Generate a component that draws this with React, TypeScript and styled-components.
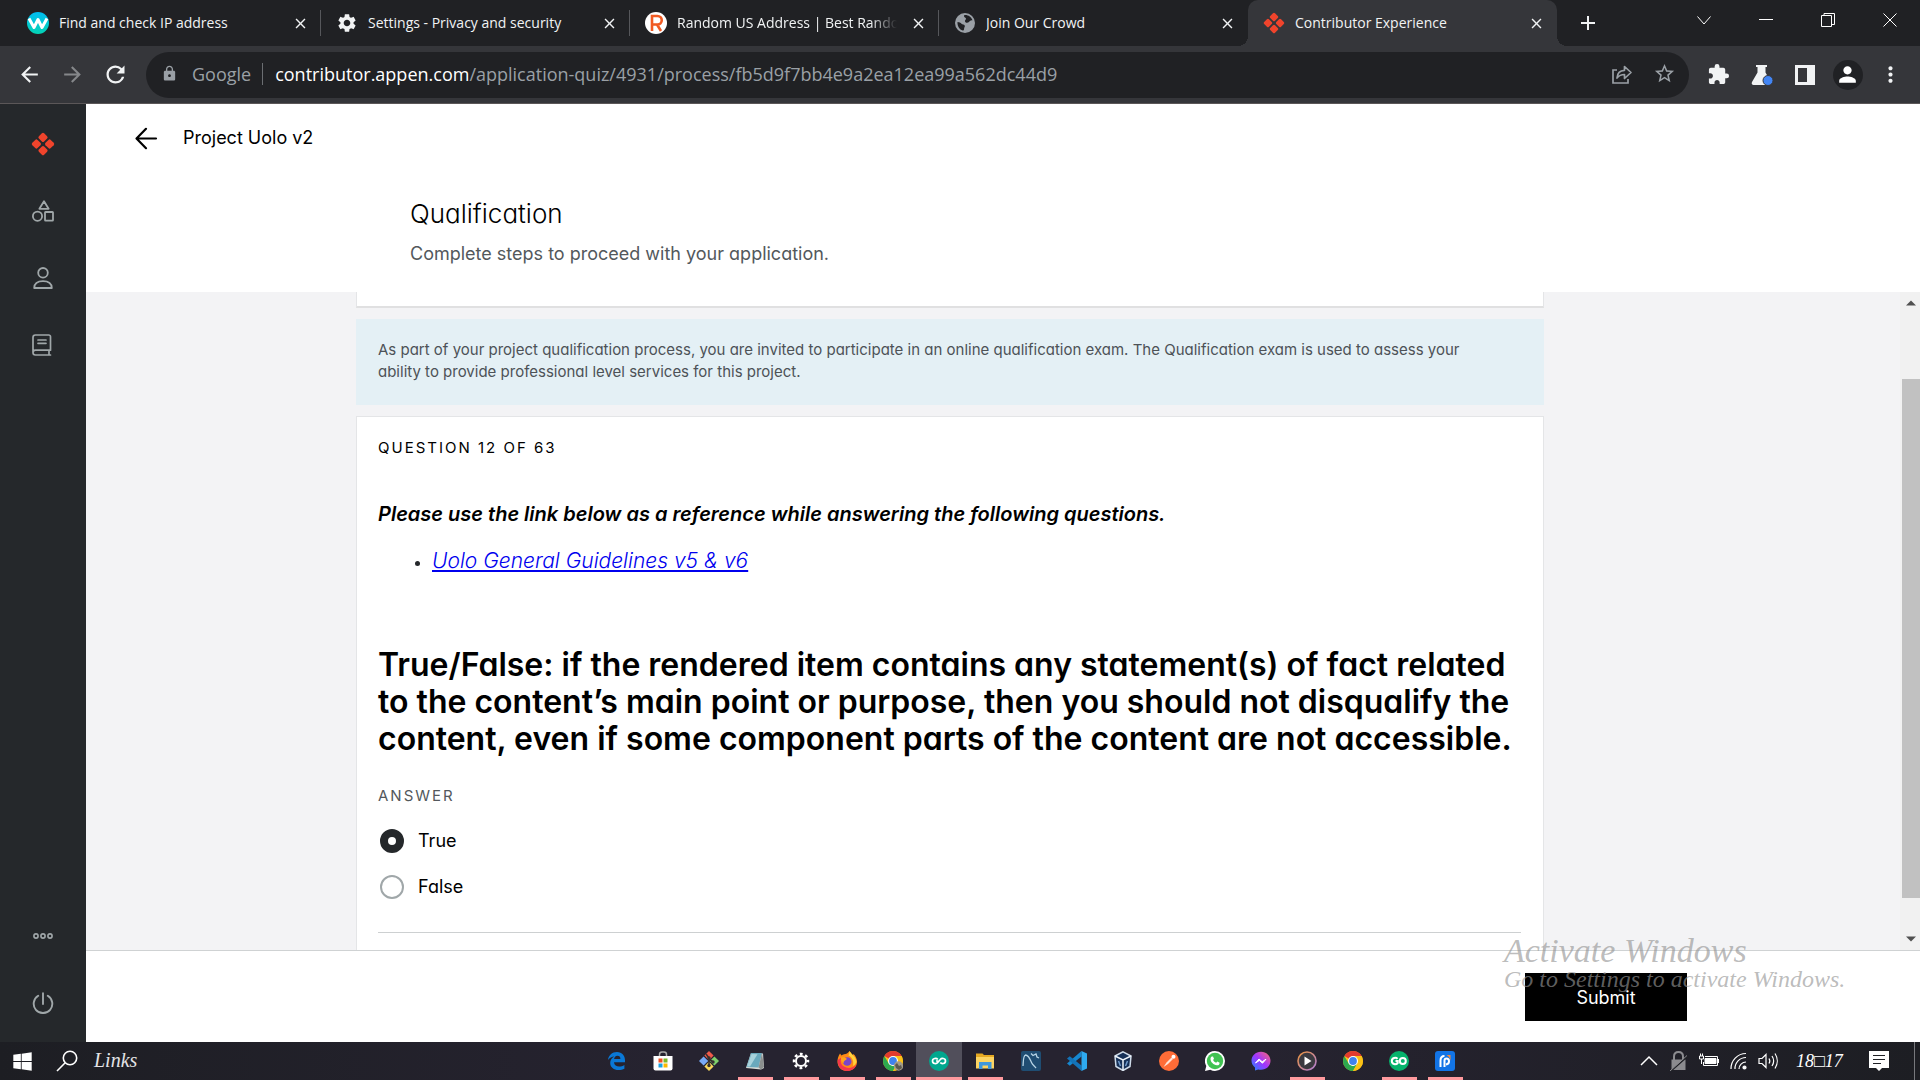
import React, { useState } from "react";
import styled, { createGlobalStyle, css } from "styled-components";
import {
  MdArrowBack,
  MdArrowForward,
  MdClose,
  MdExtension,
  MdLock,
  MdMoreVert,
  MdPerson,
  MdRefresh,
  MdSettings,
  MdStarBorder,
  MdAdd,
} from "react-icons/md";
import { FaWindows } from "react-icons/fa";

const chromeFont = '"Open Sans", "Noto Sans", sans-serif';
const pageFont = 'Inter, "Open Sans", sans-serif';
const scriptFont = '"Liberation Serif", serif';

const GlobalStyle = createGlobalStyle`
  *, *::before, *::after { box-sizing: border-box; }
  body {
    margin: 0;
    font-family: ${pageFont};
    font-feature-settings: "cv11";
    color: #000;
    background: #fff;
  }
  button { font: inherit; color: inherit; background: none; border: 0; padding: 0; cursor: pointer; }
  svg { display: block; flex: none; }
`;

const Screen = styled.div`
  display: flex;
  flex-direction: column;
  height: 100vh;
  overflow: hidden;
  position: relative;
`;

/* ---------- browser chrome ---------- */

const TabStrip = styled.div`
  display: flex;
  height: 46px;
  flex: none;
  padding-left: 12px;
  background: #202124;
  color: #f1f3f4;
  font-family: ${chromeFont};
  font-size: 14px;
`;

const Tab = styled.div<{ $active?: boolean; $line?: boolean }>`
  display: flex;
  align-items: center;
  flex: 0 1 309px;
  min-width: 0;
  padding: 0 12px 0 15px;
  position: relative;
  ${(p) =>
    p.$active &&
    css`
      background: #35363a;
      border-radius: 10px 10px 0 0;
      &::before,
      &::after {
        content: "";
        position: absolute;
        bottom: 0;
        width: 10px;
        height: 10px;
      }
      &::before {
        right: 100%;
        background: radial-gradient(circle at 0 0, transparent 10px, #35363a 10px);
      }
      &::after {
        left: 100%;
        background: radial-gradient(circle at 100% 0, transparent 10px, #35363a 10px);
      }
    `}
  ${(p) =>
    p.$line &&
    css`
      &::after {
        content: "";
        position: absolute;
        right: 0;
        top: 10px;
        width: 1px;
        height: 26px;
        background: #56575b;
      }
    `}
`;

const TabButton = styled.button`
  display: flex;
  align-items: center;
  gap: 10px;
  flex: 1;
  min-width: 0;
`;

const TabTitle = styled.span<{ $fade?: boolean }>`
  flex: 1;
  min-width: 0;
  margin-right: 12px;
  padding-bottom: 2px;
  overflow: hidden;
  white-space: nowrap;
  text-align: left;
  ${(p) => p.$fade && "mask-image: linear-gradient(to right, #000 88%, transparent);"}
`;

const IconButton = styled.button<{ $w?: number; $color?: string }>`
  display: flex;
  align-items: center;
  justify-content: center;
  width: ${(p) => p.$w ?? 43}px;
  flex: none;
  align-self: stretch;
  color: ${(p) => p.$color ?? "inherit"};
`;

const CloseButton = styled.button`
  display: flex;
  align-items: center;
  justify-content: center;
  width: 18px;
  height: 18px;
`;

const WindowControls = styled.div`
  display: flex;
  margin-left: auto;
  height: 40px;
`;

const Toolbar = styled.div`
  display: flex;
  align-items: center;
  height: 58px;
  flex: none;
  padding: 0 8px;
  background: #35363a;
  border-bottom: 1px solid #5b5758;
  color: #f1f3f4;
  font-family: ${chromeFont};
`;

const AddressBar = styled.div`
  display: flex;
  align-items: center;
  flex: 1;
  min-width: 0;
  height: 46px;
  margin: 0 8px 0 9px;
  padding: 0 3px 2px 15px;
  border-radius: 23px;
  background: #202124;
  color: #9aa0a6;
  font-size: 18px;
`;

const SiteName = styled.span`
  margin-left: 14px;
  padding-right: 11px;
  border-right: 1px solid #6b6e72;
  line-height: 22px;
`;

const Url = styled.span`
  flex: 1;
  min-width: 0;
  margin-left: 12px;
  overflow: hidden;
  white-space: nowrap;
`;

const Host = styled.span`
  color: #fff;
`;

const Avatar = styled.span`
  display: flex;
  align-items: center;
  justify-content: center;
  width: 30px;
  height: 30px;
  border-radius: 50%;
  background: #202124;
  color: #fff;
`;

/* ---------- application ---------- */

const Workspace = styled.div`
  display: flex;
  flex: 1;
  min-height: 0;
`;

const Sidebar = styled.nav`
  display: flex;
  flex-direction: column;
  align-items: center;
  width: 86px;
  flex: none;
  padding: 6px 0;
  background: #25282b;
  color: #a0a7a9;
`;

const SideItem = styled.a`
  display: flex;
  align-items: center;
  justify-content: center;
  width: 100%;
  height: 67px;
  color: inherit;
`;

const SideGap = styled.div`
  flex: 1;
`;

const Main = styled.main`
  display: flex;
  flex-direction: column;
  flex: 1;
  min-width: 0;
`;

const PageHeader = styled.header`
  flex: none;
  height: 188px;
  padding-top: 20px;
`;

const TitleRow = styled.div`
  display: flex;
  align-items: center;
  gap: 25px;
  height: 28px;
  padding-left: 48px;
`;

const ProjectTitle = styled.span`
  font-size: 18px;
  line-height: 28px;
`;

const HeaderBody = styled.div`
  padding-right: 106px;
`;

const Intro = styled.div`
  max-width: 1080px;
  margin: 44px auto 0;
`;

const Heading = styled.h1`
  margin: 0;
  font-size: 26px;
  font-weight: 350;
  line-height: 36px;
`;

const Lead = styled.p`
  margin: 8px 0 0;
  font-size: 18px;
  line-height: 28px;
  color: #53585c;
`;

const ScrollArea = styled.div`
  display: flex;
  flex: 1;
  min-height: 0;
  background: #f3f3f5;
`;

const ScrollBody = styled.div`
  display: flex;
  flex: 1;
  min-width: 0;
  overflow: hidden;
  padding-right: 86px;
`;

const Column = styled.div`
  display: flex;
  flex-direction: column;
  gap: 11px;
  width: 100%;
  max-width: 1188px;
  margin: 0 auto;
`;

const PreviousCard = styled.div`
  flex: none;
  height: 16px;
  background: #fff;
  border: 1px solid #e4e5e7;
  border-top: 0;
  border-bottom: 2px solid #e0e0e1;
`;

const Notice = styled.p`
  flex: none;
  height: 86px;
  margin: 0;
  padding: 20px 44px 20px 22px;
  background: #e4f0f5;
  color: #4d5257;
  font-size: 15px;
  line-height: 22px;
`;

const QuestionCard = styled.section`
  flex: 1;
  padding: 20px 22px 0 21px;
  background: #fff;
  border: 1px solid #e4e5e7;
  border-bottom: 0;
`;

const Overline = styled.div<{ $muted?: boolean }>`
  font-size: 15px;
  line-height: 22px;
  letter-spacing: 2px;
  color: ${(p) => (p.$muted ? "#53585c" : "#000")};
`;

const Reference = styled.p`
  margin: 41px 0 0;
  font-size: 20px;
  font-weight: 600;
  font-style: italic;
  line-height: 28px;
`;

const LinkList = styled.ul`
  margin: 19px 0 0;
  padding-left: 54px;
  color: #25282b;
`;

const LinkItem = styled.li`
  font-size: 21px;
  line-height: 28px;
  &::marker {
    font-size: 16px;
  }
`;

const GuideLink = styled.a`
  color: #0000ee;
  font-style: italic;
  font-weight: 350;
  text-decoration: underline;
`;

const Question = styled.h2`
  margin: 71px 0 0;
  font-size: 32px;
  font-weight: 580;
  line-height: 37px;
`;

const Answers = styled.fieldset`
  margin: 28px 0 0;
  padding: 0 0 33px;
  border: 0;
  border-bottom: 1px solid #cdd0d1;
`;

const Legend = styled.legend`
  padding: 0;
`;

const Option = styled.label`
  display: flex;
  align-items: center;
  gap: 14px;
  height: 24px;
  margin: 22px 0 0 2px;
  font-size: 18px;
  line-height: 24px;
`;

const Radio = styled.input`
  appearance: none;
  width: 24px;
  height: 24px;
  margin: 0;
  border: 2px solid #a0a7a9;
  border-radius: 50%;
  background: #fff;
  &:checked {
    border: 8px solid #25282b;
  }
`;

const Scrollbar = styled.div`
  display: flex;
  flex-direction: column;
  align-items: flex-end;
  width: 20px;
  flex: none;
  background: #f1f1f1;
`;

const ScrollArrow = styled.button`
  display: flex;
  align-items: center;
  justify-content: center;
  width: 18px;
  height: 22px;
`;

const Thumb = styled.div`
  width: 18px;
  flex: 519;
  background: #c1c1c1;
`;

const TrackPart = styled.div<{ $share: number }>`
  flex: ${(p) => p.$share};
`;

const Footer = styled.footer`
  display: flex;
  align-items: center;
  justify-content: flex-end;
  flex: none;
  height: 92px;
  padding-right: 233px;
  border-top: 1px solid #cfd2d3;
`;

const Submit = styled.button`
  width: 162px;
  height: 48px;
  padding-top: 2px;
  background: #000;
  color: #fff;
  font-size: 18px;
`;

const Watermark = styled.div`
  position: absolute;
  right: 80px;
  bottom: 88px;
  width: 336px;
  font-family: ${scriptFont};
  font-style: italic;
  color: rgba(150, 150, 150, 0.65);
  white-space: nowrap;
  pointer-events: none;
`;

const WatermarkTitle = styled.div`
  font-size: 34px;
  line-height: 30px;
`;

const WatermarkText = styled.div`
  font-size: 24px;
  line-height: 26px;
`;

/* ---------- taskbar ---------- */

const Taskbar = styled.div`
  display: flex;
  height: 38px;
  flex: none;
  background: linear-gradient(to right, #1d1e23, #262330 35%, #262330 65%, #1d1e23);
  color: #fff;
`;

const TaskSide = styled.div<{ $share: number; $end?: boolean }>`
  display: flex;
  align-items: center;
  flex: ${(p) => p.$share} 1 0;
  justify-content: ${(p) => (p.$end ? "flex-end" : "flex-start")};
  font-family: ${scriptFont};
  font-style: italic;
  font-size: 18px;
`;

const TaskApps = styled.div`
  display: flex;
`;

const TaskApp = styled.button<{ $open?: boolean; $active?: boolean }>`
  display: flex;
  align-items: center;
  justify-content: center;
  width: 46px;
  background: ${(p) => (p.$active ? "#514f5b" : "none")};
  position: relative;
  ${(p) =>
    p.$open &&
    css`
      &::after {
        content: "";
        position: absolute;
        bottom: 0;
        left: ${p.$active ? 0 : 6}px;
        right: ${p.$active ? 0 : 5}px;
        height: 3px;
        background: #ff9a9e;
      }
    `}
`;

const LinksLabel = styled.span`
  margin-left: 5px;
  padding-bottom: 2px;
  font-size: 20px;
  color: #e4e4e6;
`;

const Clock = styled.span`
  width: 46px;
  margin: 0 27px 0 12px;
  text-align: center;
  white-space: nowrap;
`;

const ShowDesktop = styled.button`
  width: 6px;
  margin-left: 25px;
  align-self: stretch;
  border-left: 1px solid #77787c;
`;

/* ---------- drawings ---------- */

const AppenMark = ({ size }: { size: number }) => (
  <svg width={size} height={size} viewBox="0 0 24 24" fill="#f0442c">
    {[
      [12, 5.4],
      [5.4, 12],
      [18.6, 12],
      [12, 18.6],
    ].map(([x, y]) => (
      <rect key={`${x}-${y}`} x={x - 3.7} y={y - 3.7} width="7.4" height="7.4" rx="1.6" transform={`rotate(45 ${x} ${y})`} />
    ))}
  </svg>
);

const WFavicon = () => (
  <svg width="22" height="22" viewBox="0 0 22 22">
    <defs>
      <linearGradient id="wf" x1="0" y1="0" x2="0" y2="1">
        <stop offset="0" stopColor="#00bdf2" />
        <stop offset="1" stopColor="#04d3b4" />
      </linearGradient>
    </defs>
    <circle cx="11" cy="11" r="11" fill="url(#wf)" />
    <path d="M2 6.5l5 9 4-8 4 8 5-9" fill="none" stroke="#fff" strokeWidth="3" strokeLinejoin="round" />
  </svg>
);

const RFavicon = () => (
  <svg width="22" height="22" viewBox="0 0 22 22">
    <circle cx="11" cy="11" r="11" fill="#fff" />
    <path d="M7 19V4h5.500a3.800 3.800 0 0 1 0 8.500H7M12 12.500l4 6.500" fill="none" stroke="#f05a22" strokeWidth="2.600" />
  </svg>
);

const GlobeFavicon = () => (
  <svg width="22" height="22" viewBox="-1 -1 22 22">
    <circle cx="10" cy="10" r="10" fill="#9aa0a6" />
    <path d="M2.500 9c2 .2 3 .6 4 1.800.8 1 2.600.6 3.200 1.600.6 1.200-.6 1.800-.6 3 0 1-.4 2-1.400 2.200C4.500 16.600 2.200 13 2.500 9zM10 2c3-.2 6.600 2 7.500 5.500-1.500-.5-2.500.6-3.500 1.500-1.500 1-3.500.8-4-.6-.4-1.200 1-1.600 1-2.700C11 4.500 9 4.500 9 3c0-.6.500-1 1-1z" fill="#202124" />
  </svg>
);

const ShareIcon = () => (
  <svg width="22" height="22" viewBox="0 0 22 22" fill="none" stroke="#9aa0a6" strokeWidth="1.700">
    <path d="M6 7H2v13h15v-4" />
    <path d="M6 15c.3-5 3-7.500 7.500-7.700V3.500l6.500 6-6.500 6v-4C10.500 11.500 8 12.500 6 15z" strokeLinejoin="round" />
  </svg>
);

const FlaskIcon = () => (
  <svg width="22" height="22" viewBox="0 0 22 22">
    <path d="M5 1h11v2h-1.500v5.500L20 18c.8 1.600 0 3-1.600 3H2.600C1 21 .2 19.600 1 18L6.500 8.500V3H5z" fill="#f1f3f4" />
    <circle cx="17" cy="16.500" r="5" fill="#4285f4" stroke="#35363a" />
  </svg>
);

const SidePanelIcon = () => (
  <svg width="20" height="20" viewBox="0 0 20 20">
    <path d="M0 0h20v20H0zM3 3v14h9V3z" fill="#f1f3f4" fillRule="evenodd" />
  </svg>
);

const ShapesIcon = () => (
  <svg width="22" height="22" viewBox="0 0 22 22" fill="none" stroke="currentColor" strokeWidth="1.800" strokeLinejoin="round">
    <path d="M12 1.200l4.600 7.600H7.400z" />
    <circle cx="5.500" cy="16.200" r="4.600" />
    <rect x="13" y="12" width="8" height="8.600" rx=".6" />
  </svg>
);

const UserIcon = () => (
  <svg width="20" height="22" viewBox="0 0 20 22" fill="none" stroke="currentColor" strokeWidth="1.800" strokeLinejoin="round">
    <circle cx="10" cy="5.800" r="4.800" />
    <path d="M1.200 21c.2-4.400 3.600-6.800 8.800-6.800s8.600 2.400 8.800 6.800z" />
  </svg>
);

const BookIcon = () => (
  <svg width="22" height="22" viewBox="0 0 22 22" fill="none" stroke="currentColor" strokeWidth="1.700" strokeLinejoin="round" strokeLinecap="round">
    <path d="M18.500 16.200V2.800c0-1.100-.7-1.800-1.800-1.800H3.400C2 1 1 2 1 3.400v15.200C1 20 2 21 3.400 21h15.100M18.500 16.200H3.400A2.400 2.400 0 0 0 1 18.600M17 16.200V21M6 6h8M6 9.300h8" />
  </svg>
);

const EllipsisIcon = () => (
  <svg width="20" height="6" viewBox="0 0 20 6" fill="none" stroke="currentColor" strokeWidth="1.600">
    <circle cx="3" cy="3" r="2.100" />
    <circle cx="10" cy="3" r="2.100" />
    <circle cx="17" cy="3" r="2.100" />
  </svg>
);

const PowerIcon = () => (
  <svg width="22" height="22" viewBox="0 0 22 22" fill="none" stroke="currentColor" strokeWidth="1.900" strokeLinecap="round">
    <path d="M11 1.200V12M6.200 3.800a9.300 9.300 0 1 0 9.600 0" />
  </svg>
);

const BackIcon = () => (
  <svg width="24" height="24" viewBox="0 0 24 24" fill="none" stroke="#000" strokeWidth="2.200" strokeLinecap="round" strokeLinejoin="round">
    <path d="M22 12.500H3M12 2.800L2.500 12.500l9.500 9.700" />
  </svg>
);

const TinyArrow = ({ down }: { down?: boolean }) => (
  <svg width="10" height="6" viewBox="0 0 10 6" fill="#505050">
    <path d={down ? "M0 .5h10L5 5.500z" : "M0 5.500h10L5 .5z"} />
  </svg>
);

const Art = ({ children }: { children: React.ReactNode }) => (
  <svg width="20" height="20" viewBox="0 0 20 20">
    {children}
  </svg>
);

const EdgeArt = () => (
  <svg width="18" height="18" viewBox="0 0 18 18" fill="#0a78d6">
    <path d="M0 8C.6 3.500 4 0 9 0c5.200 0 8 3.700 8 8.200v2H6c.2 3 2.500 4.300 5.200 4.300 1.900 0 3.600-.5 5.200-1.500v3.700c-1.700.9-3.700 1.300-5.800 1.300C5.700 18 2.200 15.300 2.200 11c0-3 1.500-5.300 4-6.600C4 4.500 1.500 5.600 0 8zM6.100 7h6.300c0-2-1-3.200-3-3.200S6.400 5.200 6.100 7z" />
  </svg>
);
const StoreArt = () => (
  <Art>
    <path d="M6.500 5V3.500C6.500 2 7.500 1 9 1h2c1.500 0 2.500 1 2.500 2.500V5" fill="none" stroke="#aaa" strokeWidth="1.500" />
    <path d="M.5 5h19v12.500a2 2 0 0 1-2 2h-15a2 2 0 0 1-2-2z" fill="#fff" />
    <path d="M5.500 7.500h4v4h-4z" fill="#f04e23" />
    <path d="M10.500 7.500h4v4h-4z" fill="#7db928" />
    <path d="M5.500 12.500h4v4h-4z" fill="#1ba1e2" />
    <path d="M10.500 12.500h4v4h-4z" fill="#fbb800" />
  </Art>
);
const GitArt = () => (
  <Art>
    <path d="M10 0l4.600 4.600L10 9.200 5.400 4.600z" fill="#f05a4a" />
    <path d="M4.600 5.400L9.200 10l-4.600 4.600L0 10z" fill="#78a9f5" />
    <path d="M15.400 5.400L20 10l-4.600 4.600-4.600-4.600z" fill="#7fd06c" />
    <path d="M10 10.800l4.600 4.600L10 20l-4.600-4.600z" fill="#f8d85c" />
    <path d="M7 3l3 4v8M10 8l4 3" stroke="#35302f" strokeWidth="1.600" fill="none" />
    <circle cx="10" cy="7" r="1.700" fill="#35302f" />
    <circle cx="14" cy="11" r="1.700" fill="#35302f" />
    <circle cx="10" cy="14.500" r="1.700" fill="#35302f" />
  </Art>
);
const NotepadArt = () => (
  <Art>
    <path d="M6 2l12 .5L19 17l-3 1.500L1 17z" fill="#d9dcd8" />
    <path d="M6 2h11l-3.500 14.500L1.500 16z" fill="#69a9bd" />
    <path d="M6.500 3l6 .2L5 15.500l-3 0z" fill="#a8d2dc" />
    <path d="M17 2l2 14-3 2.500-2.500-2z" fill="#8b8f8e" />
  </Art>
);
const GearArt = () => (
  <Art>
    <g stroke="#fff" fill="none">
      <circle cx="10" cy="10" r="5" strokeWidth="2" />
      <circle cx="10" cy="10" r="7" strokeWidth="2.500" strokeDasharray="2.800 2.698" strokeDashoffset="1.400" />
    </g>
  </Art>
);
const FirefoxArt = () => (
  <Art>
    <path d="M10 2.500C11 1.800 12 1 12.500 0c1.500 1.500 2 3 3 4.500l1-1.500C18.500 5 20 7.500 20 11c0 5-4.500 9-10 9S.5 16 .5 10.500C.5 7 1.500 5 3 2.500l1.500 2C6 3.500 8 3 10 2.500z" fill="#ff8a16" />
    <path d="M.7 9C.3 16 5 20 10 20c4.500 0 8.200-2.500 9.500-6.500C16 17 11 18 7 15.500 3.500 13.500 3 10 4.500 6.500z" fill="#f4364c" />
    <path d="M12.500 0C14 3 19 5 19.600 11c-1 2-2 3-3.600 4 1-4.500-.5-8.500-4.500-10.500C12 3 12.500 1.500 12.500 0z" fill="#ffd23c" />
    <circle cx="10.200" cy="10.500" r="4.300" fill="#7a44c9" />
    <path d="M4 6.500c2-.8 4.500-.3 6 1.500L8 9.500c-1 .5-1.500 1.500-1 2.500-2-.5-3.500-2.500-3-5.500z" fill="#ffa31c" />
  </Art>
);
const ChromeArt = ({ badge }: { badge?: boolean }) => (
  <Art>
    <circle cx="10" cy="10" r="10" fill="#fbc116" />
    <path d="M10 10L1.340 5A10 10 0 0 1 18.660 5H10z" fill="#e33b2e" />
    <path d="M1.340 5A10 10 0 0 0 10 20l4.330-7.500L10 15l-4.330-2.500z" fill="#2da94f" />
    <path d="M10 5h8.660A10 10 0 0 1 10 20l4.330-7.500z" fill="#fbc116" />
    <circle cx="10" cy="10" r="5" fill="#fff" />
    <circle cx="10" cy="10" r="3.900" fill="#3f82ee" />
    {badge && <circle cx="15.500" cy="15" r="4.700" fill="#a39b8a" />}
    {badge && <path d="M12 14l2-2 2 3 2-1 1 3-3 2-3-2z" fill="#5d594f" />}
  </Art>
);
const LoopArt = ({ fill }: { fill: string }) => (
  <Art>
    <circle cx="10" cy="10" r="10" fill={fill} />
    <path d="M8.800 8.500C7.500 6.800 3.500 7 3.500 10s4 3.200 5.200 1.500L11.300 8.500c1.200-1.600 5.200-1.500 5.200 1.500s-4 3.200-5.200 1.500M7 10h2" fill="none" stroke="#fff" strokeWidth="1.700" />
  </Art>
);
const GoArt = () => (
  <Art>
    <circle cx="10" cy="10" r="10" fill="#06b36c" />
    <path d="M8.500 7.800C7 6 2.800 6.700 2.800 10s4.200 4 5.900 2V10H6.500" fill="none" stroke="#fff" strokeWidth="2" />
    <circle cx="13.800" cy="10" r="3" fill="none" stroke="#fff" strokeWidth="2" />
  </Art>
);
const FolderArt = () => (
  <Art>
    <path d="M1 2.500h6.500L9 4h10v13H1z" fill="#e6a922" />
    <path d="M1 6h18v11.500H1z" fill="#fcd462" />
    <path d="M4 11h12.500v7H13v-3.500H7.500V18H4z" fill="#3f97dc" />
  </Art>
);
const MysqlArt = () => (
  <Art>
    <rect width="20" height="20" rx="2" fill="#1f4d72" />
    <path d="M2 15c.5-5 0-10 2.500-11 3 0 4.500 4 6 7.500 1 2.500 3 3.500 4.500 5.500M10 2.500l2 2 3-1.500 1 3 2 1" fill="none" stroke="#b9d5e6" strokeWidth="1.300" />
  </Art>
);
const CodeArt = () => (
  <Art>
    <path d="M14.500 0v5.500L2.800 14.800 0 12.600z" fill="#1687cf" />
    <path d="M0 7.400l2.800-2.200L14.500 14.500V20z" fill="#1373b8" />
    <path d="M14.500 0L20 2.500v15L14.500 20z" fill="#2eaaf0" />
  </Art>
);
const BoxArt = () => (
  <Art>
    <path d="M10 .8l8 4.200-1 10.500-7 4-7-4L2 5z" fill="#163057" stroke="#cfdcea" strokeWidth="1.500" />
    <path d="M2 5l8 4 8-4M10 9v10.500" stroke="#eef4fa" strokeWidth="1.500" fill="none" />
    <path d="M5.500 10l2 5M14.500 10l-2 5" stroke="#6f9bcb" strokeWidth="1.500" />
  </Art>
);
const PostmanArt = () => (
  <Art>
    <circle cx="10" cy="10" r="10" fill="#ff6c37" />
    <path d="M4.500 16l3-4.500 5-5 1.500 1.500-5 5z" fill="#ffe4d8" />
    <circle cx="14.500" cy="5.700" r="2" fill="#fff" />
  </Art>
);
const WhatsappArt = () => (
  <Art>
    <path d="M10 0a10 10 0 0 1 0 20c-1.700 0-3.300-.4-4.700-1.200L0 20l1.300-5A10 10 0 0 1 10 0z" fill="#fff" />
    <circle cx="10" cy="10" r="8.200" fill="#41c352" />
    <path d="M6.800 5.500l1.200-.1 1 2.400-.9 1.200c.7 1.300 1.700 2.200 3.100 2.800l1.100-1.200 2.300 1.100c.1 1.800-1.200 2.800-2.800 2.600C8.500 13.800 5.500 11 5.500 8c0-1 .4-2 1.300-2.500z" fill="#fff" />
  </Art>
);
const MessengerArt = () => (
  <Art>
    <defs>
      <linearGradient id="ms" x1="0" y1="1" x2="1" y2="0">
        <stop offset="0" stopColor="#1b8bff" />
        <stop offset=".5" stopColor="#a034ff" />
        <stop offset="1" stopColor="#ff6a70" />
      </linearGradient>
    </defs>
    <path d="M10 .8c5.500 0 9.500 4 9.500 9s-4 9-9.500 9c-1 0-2-.1-2.800-.4L4 19.500v-3C1.800 14.800.5 12.500.5 9.800c0-5 4-9 9.500-9z" fill="url(#ms)" />
    <path d="M4.500 12l3.500-4 3.200 2.700L15 8.200l-3.500 4L8.300 9.500z" fill="#fff" stroke="#fff" />
  </Art>
);
const MediaArt = () => (
  <Art>
    <defs>
      <linearGradient id="md" x1="0" y1="0" x2="1" y2="1">
        <stop offset="0" stopColor="#e8923c" />
        <stop offset="1" stopColor="#b07fd8" />
      </linearGradient>
    </defs>
    <circle cx="10" cy="10" r="9" fill="#3b3a40" stroke="url(#md)" strokeWidth="1.600" />
    <path d="M7.500 5.500l7 4.500-7 4.500z" fill="#fff" />
  </Art>
);
const PiArt = () => (
  <Art>
    <rect width="20" height="20" rx="3" fill="#1274e6" />
    <path d="M11.500 4h4v6c-.5-3-1.500-4.500-4-6z" fill="#f58a3c" />
    <path d="M5.500 16V9.500C5.500 6.500 6.500 5 9.500 5M9.500 16V9.500c0-1.200.5-2 2-2 1.800 0 2.500 1 2.500 2.700 0 2-1 3-3 3.300" fill="none" stroke="#fff" strokeWidth="2" />
  </Art>
);

const SearchArt = () => (
  <svg width="22" height="22" viewBox="0 0 22 22" fill="none" stroke="#fff" strokeWidth="1.600">
    <circle cx="14" cy="8" r="6.700" />
    <path d="M9.200 12.800L1 21" />
  </svg>
);
const TrayChevron = () => (
  <svg width="18" height="12" viewBox="0 0 18 12" fill="none" stroke="#fff" strokeWidth="1.500">
    <path d="M1 10l8-8 8 8" />
  </svg>
);
const TrayLock = () => (
  <svg width="18" height="20" viewBox="0 0 18 20">
    <path d="M4 9V5.500C4 2.500 6 1 8.500 1S13 2.500 13 5.500V9" fill="none" stroke="#8b8b8f" strokeWidth="2" />
    <path d="M1.500 8.500h14V19h-14z" fill="#8b8b8f" />
    <path d="M1 20L18 5" stroke="#202126" strokeWidth="1.500" />
    <path d="M0 20L17 4.500" stroke="#8b8b8f" />
  </svg>
);
const TrayBattery = () => (
  <svg width="20" height="16" viewBox="0 0 20 16" fill="none" stroke="#fff">
    <path d="M6 3.500h12.500v9H4.500V9M.5 3h4v3h-4zM1.500 3V.5M3.500 3V.5M2.500 6v5M19.500 6v4" />
    <path d="M6 5.500h11v5H6z" fill="#fff" />
  </svg>
);
const TrayWifi = () => (
  <svg width="18" height="18" viewBox="0 0 18 18" fill="none" stroke="#fff" strokeWidth="1.200">
    <path d="M1 17A15 15 0 0 1 16 1.500M5 17A11 11 0 0 1 16 5.500M9 17a7 7 0 0 1 7-7" />
    <circle cx="14.500" cy="15.500" r="1.500" fill="#fff" />
  </svg>
);
const TrayVolume = () => (
  <svg width="22" height="18" viewBox="0 0 22 18" fill="none" stroke="#fff" strokeWidth="1.200">
    <path d="M1 6.500h3l4-4v13l-4-4H1zM11 6.500c1 1.500 1 3.500 0 5M14 4c2 3 2 7 0 10M17 1.500c3 4.500 3 10.500 0 15" />
  </svg>
);
const NoticeArt = () => (
  <svg width="20" height="20" viewBox="0 0 20 20">
    <path d="M0 0h20v17h-7l-3 3-3-3H0z" fill="#fff" />
    <path d="M4 4.500h12M4 8.500h12M4 12.500h8" stroke="#202126" strokeWidth="1.200" />
  </svg>
);

/* ---------- data ---------- */

const tabs = [
  { title: "Find and check IP address", icon: <WFavicon />, line: true },
  { title: "Settings - Privacy and security", icon: <MdSettings size={22} />, line: true },
  { title: "Random US Address | Best Rando", icon: <RFavicon />, line: true, fade: true },
  { title: "Join Our Crowd", icon: <GlobeFavicon /> },
  { title: "Contributor Experience", icon: <AppenMark size={22} />, active: true },
];

const apps: { name: string; art: React.ReactNode; open?: boolean; active?: boolean }[] = [
  { name: "Edge", art: <EdgeArt /> },
  { name: "Store", art: <StoreArt /> },
  { name: "Git", art: <GitArt /> },
  { name: "Notepad", art: <NotepadArt />, open: true },
  { name: "Settings", art: <GearArt />, open: true },
  { name: "Firefox", art: <FirefoxArt />, open: true },
  { name: "Chrome profile", art: <ChromeArt badge />, open: true },
  { name: "Arduino", art: <LoopArt fill="#00a78e" />, open: true, active: true },
  { name: "File Explorer", art: <FolderArt />, open: true },
  { name: "MySQL Workbench", art: <MysqlArt /> },
  { name: "Visual Studio Code", art: <CodeArt /> },
  { name: "VirtualBox", art: <BoxArt /> },
  { name: "Postman", art: <PostmanArt /> },
  { name: "WhatsApp", art: <WhatsappArt /> },
  { name: "Messenger", art: <MessengerArt /> },
  { name: "Media player", art: <MediaArt />, open: true },
  { name: "Chrome", art: <ChromeArt /> },
  { name: "GoLogin", art: <GoArt />, open: true },
  { name: "Proxy", art: <PiArt />, open: true },
];

export default function App() {
  const [answer, setAnswer] = useState("True");
  return (
    <Screen>
      <GlobalStyle />
      <TabStrip>
        {tabs.map((t) => (
          <Tab key={t.title} $active={t.active} $line={t.line}>
            <TabButton>
              {t.icon}
              <TabTitle $fade={t.fade}>{t.title}</TabTitle>
            </TabButton>
            <CloseButton aria-label="Close tab">
              <MdClose size={17} />
            </CloseButton>
          </Tab>
        ))}
        <IconButton $w={62} aria-label="New tab">
          <MdAdd size={24} />
        </IconButton>
        <WindowControls>
          <IconButton $w={62} aria-label="Search tabs">
            <svg width="14" height="9" viewBox="0 0 14 9" fill="none" stroke="#fff">
              <path d="M.5 .5L7 8 13.500 .5" />
            </svg>
          </IconButton>
          <IconButton $w={62} aria-label="Minimize">
            <svg width="14" height="2" viewBox="0 0 14 2">
              <path d="M0 0h14v1H0z" fill="#fff" />
            </svg>
          </IconButton>
          <IconButton $w={62} aria-label="Restore">
            <svg width="14" height="14" viewBox="0 0 14 14" fill="none" stroke="#fff">
              <path d="M.5 2.500h10v11H.5zM3 2.500v-2h10.500v11h-3" />
            </svg>
          </IconButton>
          <IconButton $w={61} aria-label="Close">
            <svg width="14" height="14" viewBox="0 0 14 14" stroke="#fff">
              <path d="M.5 .5l13 13M13.500 .5l-13 13" />
            </svg>
          </IconButton>
        </WindowControls>
      </TabStrip>
      <Toolbar>
        <IconButton aria-label="Back">
          <MdArrowBack size={25} />
        </IconButton>
        <IconButton $color="#85878a" aria-label="Forward">
          <MdArrowForward size={25} />
        </IconButton>
        <IconButton aria-label="Reload">
          <MdRefresh size={27} />
        </IconButton>
        <AddressBar>
          <MdLock size={17} />
          <SiteName>Google</SiteName>
          <Url>
            <Host>contributor.appen.com</Host>/application-quiz/4931/process/fb5d9f7bb4e9a2ea12ea99a562dc44d9
          </Url>
          <IconButton aria-label="Share">
            <ShareIcon />
          </IconButton>
          <IconButton aria-label="Bookmark">
            <MdStarBorder size={23} />
          </IconButton>
        </AddressBar>
        <IconButton aria-label="Extensions">
          <MdExtension size={23} />
        </IconButton>
        <IconButton aria-label="Experiments">
          <FlaskIcon />
        </IconButton>
        <IconButton aria-label="Side panel">
          <SidePanelIcon />
        </IconButton>
        <IconButton aria-label="Profile">
          <Avatar>
            <MdPerson size={25} />
          </Avatar>
        </IconButton>
        <IconButton aria-label="Menu">
          <MdMoreVert size={25} />
        </IconButton>
      </Toolbar>

      <Workspace>
        <Sidebar>
          <SideItem href="#" aria-label="Home">
            <AppenMark size={24} />
          </SideItem>
          <SideItem href="#" aria-label="Projects">
            <ShapesIcon />
          </SideItem>
          <SideItem href="#" aria-label="Profile">
            <UserIcon />
          </SideItem>
          <SideItem href="#" aria-label="Guides">
            <BookIcon />
          </SideItem>
          <SideGap />
          <SideItem href="#" aria-label="More">
            <EllipsisIcon />
          </SideItem>
          <SideItem href="#" aria-label="Log out">
            <PowerIcon />
          </SideItem>
        </Sidebar>

        <Main>
          <PageHeader>
            <TitleRow>
              <IconButton $w={24} aria-label="Go back">
                <BackIcon />
              </IconButton>
              <ProjectTitle>Project Uolo v2</ProjectTitle>
            </TitleRow>
            <HeaderBody>
              <Intro>
                <Heading>Qualification</Heading>
                <Lead>Complete steps to proceed with your application.</Lead>
              </Intro>
            </HeaderBody>
          </PageHeader>

          <ScrollArea>
            <ScrollBody>
              <Column>
                <PreviousCard />
                <Notice>
                  As part of your project qualification process, you are invited to participate in an online
                  qualification exam. The Qualification exam is used to assess your ability to provide professional
                  level services for this project.
                </Notice>
                <QuestionCard>
                  <Overline>QUESTION 12 OF 63</Overline>
                  <Reference>Please use the link below as a reference while answering the following questions.</Reference>
                  <LinkList>
                    <LinkItem>
                      <GuideLink href="#">Uolo General Guidelines v5 &amp; v6</GuideLink>
                    </LinkItem>
                  </LinkList>
                  <Question>
                    True/False: if the rendered item contains any statement(s) of fact related to the content’s main
                    point or purpose, then you should not disqualify the content, even if some component parts of the
                    content are not accessible.
                  </Question>
                  <Answers>
                    <Legend>
                      <Overline $muted>ANSWER</Overline>
                    </Legend>
                    {["True", "False"].map((v) => (
                      <Option key={v}>
                        <Radio type="radio" name="answer" checked={answer === v} onChange={() => setAnswer(v)} />
                        {v}
                      </Option>
                    ))}
                  </Answers>
                </QuestionCard>
              </Column>
            </ScrollBody>
            <Scrollbar>
              <ScrollArrow aria-label="Scroll up">
                <TinyArrow />
              </ScrollArrow>
              <TrackPart $share={65} />
              <Thumb />
              <TrackPart $share={30} />
              <ScrollArrow aria-label="Scroll down">
                <TinyArrow down />
              </ScrollArrow>
            </Scrollbar>
          </ScrollArea>

          <Footer>
            <Submit type="submit">Submit</Submit>
          </Footer>
        </Main>
      </Workspace>

      <Watermark>
        <WatermarkTitle>Activate Windows</WatermarkTitle>
        <WatermarkText>Go to Settings to activate Windows.</WatermarkText>
      </Watermark>

      <Taskbar>
        <TaskSide $share={594}>
          <IconButton $w={44} aria-label="Start">
            <FaWindows size={21} />
          </IconButton>
          <IconButton $w={45} aria-label="Search">
            <SearchArt />
          </IconButton>
          <LinksLabel>Links</LinksLabel>
        </TaskSide>
        <TaskApps>
          {apps.map((a) => (
            <TaskApp key={a.name} aria-label={a.name} $open={a.open} $active={a.active}>
              {a.art}
            </TaskApp>
          ))}
        </TaskApps>
        <TaskSide $share={452} $end>
          <IconButton $w={30} aria-label="Hidden icons">
            <TrayChevron />
          </IconButton>
          <IconButton $w={30} aria-label="Lock">
            <TrayLock />
          </IconButton>
          <IconButton $w={30} aria-label="Battery">
            <TrayBattery />
          </IconButton>
          <IconButton $w={30} aria-label="Network">
            <TrayWifi />
          </IconButton>
          <IconButton $w={30} aria-label="Volume">
            <TrayVolume />
          </IconButton>
          <Clock>18□17</Clock>
          <IconButton $w={20} aria-label="Notifications">
            <NoticeArt />
          </IconButton>
          <ShowDesktop aria-label="Show desktop" />
        </TaskSide>
      </Taskbar>
    </Screen>
  );
}
